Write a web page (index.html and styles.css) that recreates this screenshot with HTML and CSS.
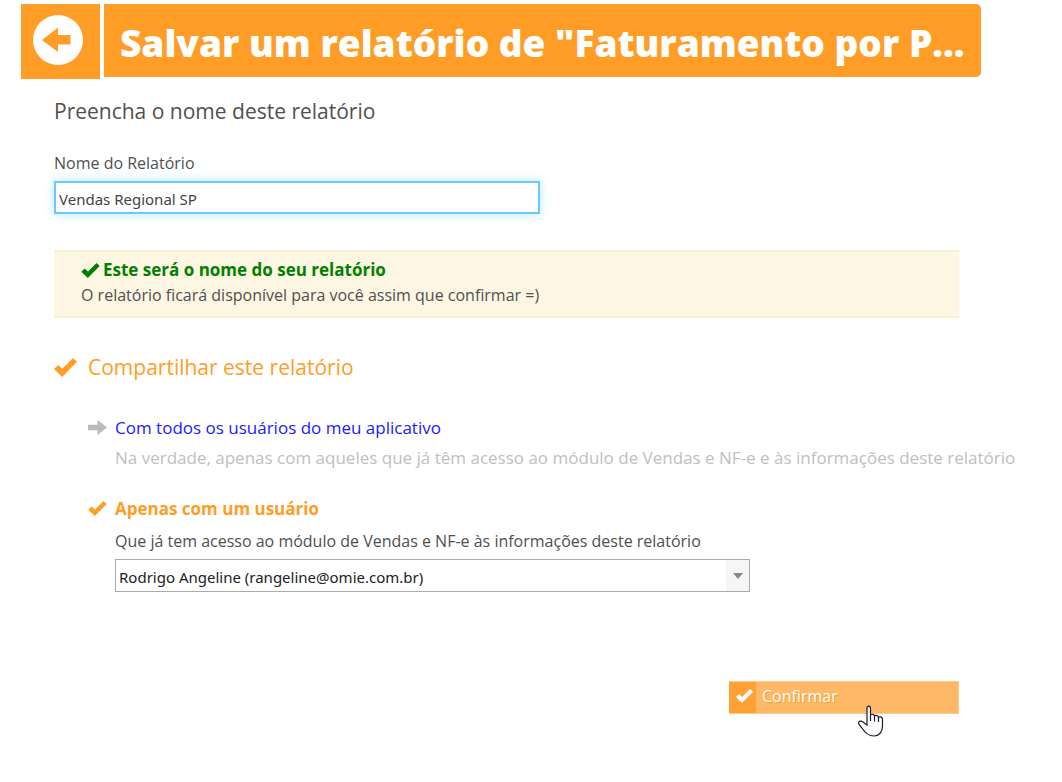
FILE: index.html
```html
<!DOCTYPE html>
<html lang="pt-BR">
<head>
<meta charset="utf-8">
<meta name="viewport" content="width=device-width, initial-scale=1">
<title>Salvar um relatório</title>
<link rel="stylesheet" href="styles.css">
</head>
<body>
<svg class="symbols" aria-hidden="true">
  <symbol id="check" viewBox="0 0 22 18"><path d="M0 10.5 4 6.5 8 10.2 18.2 0 22 3.6 7.8 18Z"/></symbol>
</svg>
<div class="page">
  <header class="header">
    <button class="back" type="button" aria-label="Voltar">
      <svg viewBox="0 0 50 50"><circle cx="25" cy="25" r="25" fill="#fff"/><path d="M9 25 25 12.500V20H37.500V29.500H25V37Z" fill="#ff9d26"/></svg>
    </button>
    <h1 class="title">Salvar um relatório de "Faturamento por P...</h1>
  </header>
  <main class="content">
    <h2 class="heading">Preencha o nome deste relatório</h2>
    <label class="label" for="name">Nome do Relatório</label>
    <input class="name-input" id="name" type="text" value="Vendas Regional SP">
    <div class="notice">
      <p class="notice-title"><svg class="notice-icon"><use href="#check"/></svg>Este será o nome do seu relatório</p>
      <p class="notice-text">O relatório ficará disponível para você assim que confirmar =)</p>
    </div>
    <h2 class="share"><svg class="share-icon"><use href="#check"/></svg>Compartilhar este relatório</h2>
    <section class="option">
      <svg class="option-icon arrow" viewBox="0 0 18 14"><path d="M0 4.500H9V0L18 7 9 14V9.500H0Z"/></svg>
      <div class="option-body">
        <a class="option-link" href="#">Com todos os usuários do meu aplicativo</a>
        <p class="option-hint">Na verdade, apenas com aqueles que já têm acesso ao módulo de Vendas e NF-e e às informações deste relatório</p>
      </div>
    </section>
    <section class="option chosen">
      <svg class="option-icon"><use href="#check"/></svg>
      <div class="option-body">
        <a class="option-link" href="#">Apenas com um usuário</a>
        <label class="user-label" for="user">Que já tem acesso ao módulo de Vendas e NF-e às informações deste relatório</label>
        <div class="select-box">
          <select class="select" id="user"><option>Rodrigo Angeline (rangeline@omie.com.br)</option></select>
          <span class="select-arrow"><svg viewBox="0 0 10 6"><path d="M0 0H10L5 6Z"/></svg></span>
        </div>
      </div>
    </section>
    <div class="actions">
      <button class="confirm" type="button">
        <span class="confirm-icon"><svg><use href="#check"/></svg></span>
        <span class="confirm-text">Confirmar</span>
      </button>
      <svg class="cursor" viewBox="0 0 26 32"><path d="M9 20V3.500C9 .3 12.500 .3 12.500 3.500V10C14.500 8.500 16 9.500 16.500 11 18.500 9.800 20 10.500 20.500 12.300 22.500 11.300 24.500 12 24.500 14.500V21C24.500 27 21 31 16 31 10 31 7 28 4 23L1 19.500C-.5 16 3 15.500 5 17ZM12.500 10V16M16.500 11V16.500M20.500 12.300V17"/></svg>
    </div>
  </main>
</div>
</body>
</html>
```
FILE: styles.css
```css
* { box-sizing: border-box; }
body { margin: 0; background: #fff; color: #505050; font: 16px/24px "Open Sans", sans-serif; }
h1, h2, p { margin: 0; font-weight: 400; }
svg { display: block; fill: currentColor; }
button, input, select { font: inherit; }
.symbols { position: absolute; width: 0; height: 0; }
.page { max-width: 981px; padding: 4px 0 24px 21px; }
.header { display: flex; align-items: flex-start; gap: 4px; }
.back { flex: none; width: 79px; height: 75px; padding: 0 0 4px 12px; border: 0; background: #ff9d26; }
.back svg { width: 50px; height: 50px; }
.title { flex: 1; min-width: 0; height: 73px; padding: 0 0 0 16px; overflow: hidden; border-radius: 0 5px 5px 0; background: #ff9d26; color: #fff; font-size: 37px; font-weight: 800; line-height: 77px; white-space: nowrap; }
.content { padding: 16px 22px 0 33px; }
.heading { font-size: 21px; line-height: 32px; }
.label { display: block; margin-top: 24px; }
.name-input { display: block; width: 486px; max-width: 100%; height: 33px; margin-top: 6px; padding: 2px 3px 0; border: 2px solid #6cf; outline: 0; color: #444; font-family: "Noto Sans", sans-serif; font-size: 15px; box-shadow: 0 0 10px #b5e6ff; }
.notice { margin-top: 36px; padding: 6px 27px 9px; border: 1px solid #fcefcf; border-width: 2px 0; background: #fdf6e3; }
.notice-title { display: flex; align-items: center; gap: 3px; color: #008000; font-size: 17px; font-weight: 700; }
.notice-text { padding-top: 1px; }
.notice-icon { width: 19px; height: 15px; }
.share { display: flex; align-items: center; gap: 11px; margin-top: 33px; color: #ff9d26; font-size: 21px; line-height: 32px; }
.share-icon { width: 23px; height: 19px; }
.option { display: flex; gap: 8px; margin: 33px 0 0 34px; }
.option-icon { flex: none; width: 19px; height: 15px; margin-top: 4px; }
.arrow { color: #bbb; }
.option-body { flex: 1; min-width: 0; }
.option-link { display: block; color: #1a1aff; font-size: 17px; text-decoration: none; }
.option-hint { margin-top: 6px; color: #c0c0c0; font-size: 17px; white-space: nowrap; }
.chosen { margin-top: 27px; color: #ff9d26; }
.chosen .option-link { color: #ff9d26; font-weight: 700; }
.user-label { display: block; margin-top: 8px; color: #505050; }
.select-box { display: flex; width: 635px; max-width: 100%; height: 33px; margin-top: 6px; border: 1px solid #aaa; background: #fff; }
.select { flex: 1; min-width: 0; padding: 2px 3px 0; border: 0; outline: 0; appearance: none; background: #fff; color: #222; font-family: "Noto Sans", sans-serif; font-size: 15px; }
.select-arrow { display: flex; align-items: center; justify-content: center; width: 23px; background: #f6f6f6; color: #888; }
.select-arrow svg { width: 10px; height: 6px; }
.actions { position: relative; display: flex; justify-content: flex-end; margin-top: 89px; }
.confirm { display: flex; width: 230px; height: 33px; padding: 0; border: 1px solid #ffc98a; border-left: 0; background: #ffb966; color: #fff; text-align: left; }
.confirm-icon { display: flex; align-items: center; justify-content: center; align-self: stretch; width: 27px; padding: 0 0 4px 4px; background: #ffa136; }
.confirm-icon svg { width: 17px; height: 14px; }
.confirm-text { padding: 2px 6px; text-shadow: 1px 1px 1px #f19a3a; }
.cursor { position: absolute; top: 24px; right: 75px; width: 26px; height: 32px; fill: #fff; stroke: #1c1c30; stroke-width: 1.200; }
```
